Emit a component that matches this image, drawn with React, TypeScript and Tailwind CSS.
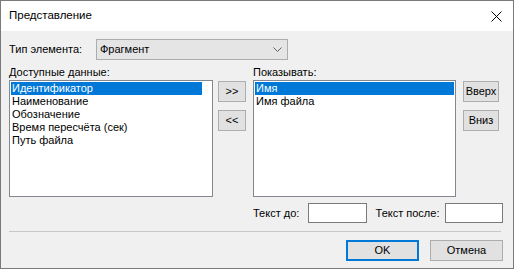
const font = { fontFamily: '"Liberation Sans", Arial, sans-serif' };

function Btn({ children, className = "" }: { children: React.ReactNode; className?: string }) {
  return (
    <div
      className={`flex items-center justify-center bg-[#e1e1e1] border border-[#adadad] text-[11px] text-black whitespace-nowrap ${className}`}
    >
      {children}
    </div>
  );
}

function ListBox({
  items,
  width,
  selWidth,
}: {
  items: string[];
  width: string;
  selWidth?: string;
}) {
  return (
    <div className={`${width} h-[117px] bg-white border border-[#828790] pt-[1px] px-[1px]`}>
      {items.map((it, i) => (
        <div
          key={it}
          className={`h-[13px] leading-[13px] pl-[1px] text-[11px] whitespace-nowrap ${
            i === 0 ? `bg-[#0078d7] text-white ${selWidth ?? ""}` : "text-black"
          }`}
        >
          {it}
        </div>
      ))}
    </div>
  );
}

export default function App() {
  return (
    <div className="w-[514px] h-[269px] border border-[#7a7a7a] flex flex-col text-black" style={font}>
      {/* title bar */}
      <div className="h-[30px] bg-white flex items-center pl-[8px] pr-[10px] justify-between">
        <span className="text-[11.5px]">Представление</span>
        <svg width="11" height="11" viewBox="0 0 11 11" className="mt-[1px] mr-[1px]">
          <path d="M0.5 0.5 L10.5 10.5 M10.5 0.5 L0.5 10.5" stroke="#000" strokeWidth="1" />
        </svg>
      </div>

      <div className="flex-1 bg-[#f0f0f0] pl-[8px] pr-[10px] flex flex-col text-[11px]">
        {/* element type */}
        <div className="flex items-center mt-[8px] h-[21px]">
          <span className="w-[87px] whitespace-nowrap">Тип элемента:</span>
          <div className="w-[192px] h-[21px] bg-[#e5e5e5] border border-[#adadad] flex items-center justify-between pl-[3px] pr-[5px]">
            <span>Фрагмент</span>
            <svg width="9" height="5" viewBox="0 0 9 5">
              <path d="M0.5 0.5 L4.5 4.5 L8.5 0.5" stroke="#606060" fill="none" strokeWidth="1" />
            </svg>
          </div>
        </div>

        {/* labels */}
        <div className="flex mt-[5px] h-[15px] leading-[15px]">
          <span className="w-[244px] whitespace-nowrap">Доступные данные:</span>
          <span className="whitespace-nowrap">Показывать:</span>
        </div>

        {/* lists */}
        <div className="flex">
          <ListBox
            width="w-[204px]"
            selWidth="w-[191px]"
            items={["Идентификатор", "Наименование", "Обозначение", "Время пересчёта (сек)", "Путь файла"]}
          />
          <div className="flex flex-col ml-[5px] mt-[1px] gap-[8px]">
            <Btn className="w-[28px] h-[21px]">&gt;&gt;</Btn>
            <Btn className="w-[28px] h-[21px]">&lt;&lt;</Btn>
          </div>
          <div className="ml-[7px]">
            <ListBox width="w-[203px]" items={["Имя", "Имя файла"]} />
          </div>
          <div className="flex flex-col ml-[7px] mt-[1px] gap-[8px]">
            <Btn className="w-[36px] h-[21px]">Вверх</Btn>
            <Btn className="w-[36px] h-[21px]">Вниз</Btn>
          </div>
        </div>

        {/* text before / after */}
        <div className="flex items-center mt-[6px] h-[20px] pl-[244px]">
          <span className="w-[55px] whitespace-nowrap">Текст до:</span>
          <div className="w-[59px] h-[20px] bg-white border border-[#7a7a7a]" />
          <span className="ml-[9px] w-[70px] whitespace-nowrap">Текст после:</span>
          <div className="w-[58px] h-[20px] bg-white border border-[#7a7a7a]" />
        </div>

        {/* separator */}
        <div className="mt-[8px] mr-[2px] h-[1px] bg-[#c8c8c8]" />

        {/* bottom buttons */}
        <div className="flex justify-end mt-[8px] gap-[11px]">
          <div className="w-[73px] h-[21px] flex items-center justify-center bg-[#e1e1e1] border-2 border-[#0078d7]">
            OK
          </div>
          <Btn className="w-[73px] h-[21px]">Отмена</Btn>
        </div>
      </div>
    </div>
  );
}
